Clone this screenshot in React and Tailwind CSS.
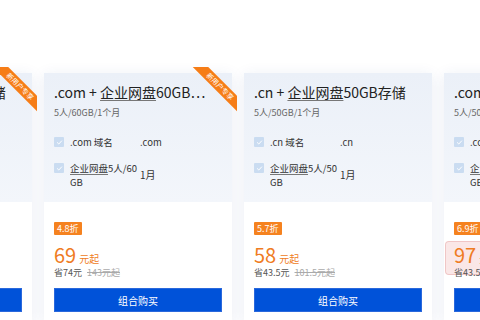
import React from "react";

const cards = [
  {
    pre: ".cn + ",
    post: "50GB存储",
    sub: "5人/50GB/1个月",
    domain: ".cn 域名",
    domainVal: ".cn",
    disk: "5人/50GB",
    discount: "5.7折",
    price: "58",
    save: "省43.5元",
    orig: "101.5元起",
    ribbon: true,
  },
  {
    pre: ".com + ",
    post: "60GB…",
    sub: "5人/60GB/1个月",
    domain: ".com 域名",
    domainVal: ".com",
    disk: "5人/60GB",
    discount: "4.8折",
    price: "69",
    save: "省74元",
    orig: "143元起",
    ribbon: true,
  },
  {
    pre: ".cn + ",
    post: "50GB存储",
    sub: "5人/50GB/1个月",
    domain: ".cn 域名",
    domainVal: ".cn",
    disk: "5人/50GB",
    discount: "5.7折",
    price: "58",
    save: "省43.5元",
    orig: "101.5元起",
  },
  {
    pre: ".com + ",
    post: "100GB存储",
    sub: "5人/50GB/1个月",
    domain: ".com 域名",
    domainVal: ".com",
    disk: "5人/50GB",
    discount: "6.9折",
    price: "97",
    save: "省43.5元",
    orig: "140.5元起",
    stamp: true,
  },
];

const Check = () => (
  <span className="mt-[2px] flex h-[10px] w-[10px] shrink-0 items-center justify-center rounded-[1px] bg-[#cadcf1]">
    <svg viewBox="0 0 10 10" className="h-[7px] w-[7px]" fill="none">
      <path d="M2 5.2l2 2 4-4.4" stroke="#fff" strokeWidth={1.4} strokeLinecap="round" strokeLinejoin="round" />
    </svg>
  </span>
);

const Ribbon = () => (
  <div className="pointer-events-none absolute -right-[5px] -top-[6px] z-10 h-[50px] w-[50px] overflow-hidden">
    <div className="absolute left-[-7px] top-[14px] flex h-[11px] w-[80px] rotate-45 items-center justify-center bg-[#f67d17] text-[7px] leading-none text-white">
      新用户专享
    </div>
  </div>
);

const Card = ({ c }) => (
  <div className="relative w-[188px] shrink-0 bg-white shadow-[0_2px_14px_rgba(30,70,140,0.09)]">
    {c.ribbon && <Ribbon />}

    {/* top: plan info */}
    <div className="bg-gradient-to-b from-[#ebf0f8] to-[#f3f6fb] px-[10px] pb-[13px] pt-2">
      <div className="whitespace-nowrap text-[14px] leading-[22px] text-[#222]">
        {c.pre}
        <span className="underline decoration-[#777] underline-offset-2">企业网盘</span>
        {c.post}
      </div>
      <div className="mt-[2px] text-[9px] leading-[16px] text-[#666]">{c.sub}</div>

      <div className="mt-[14px] flex flex-col gap-3 text-[9.5px] leading-[14px] text-[#333]">
        <div className="flex items-start">
          <Check />
          <span className="ml-[6px] w-[70px] shrink-0">{c.domain}</span>
          <span>{c.domainVal}</span>
        </div>
        <div className="flex items-start">
          <Check />
          <span className="ml-[6px] w-[70px] shrink-0 break-all">
            <span className="underline decoration-[#777] underline-offset-2">企业网盘</span>
            {c.disk}
          </span>
          <span className="self-center text-[10px]">1月</span>
        </div>
      </div>
    </div>

    {/* bottom: price */}
    <div className="relative px-[10px] pb-[10px] pt-[11px]">
      <span className="inline-block h-[13px] rounded-[1px] bg-[#f5821f] px-[3px] text-[9px] leading-[13px] text-white">
        {c.discount}
      </span>
      <div className="relative mt-[7px] flex items-baseline text-[#ef7c23]">
        {c.stamp && (
          <span className="absolute -left-[9px] -top-[3px] h-[34px] w-[46px] rounded-[4px] border border-[#eab0b0]/60 bg-[#f6cfcf]/50" />
        )}
        <span className="relative text-[20px] leading-[22px]">{c.price}</span>
        <span className="relative ml-[3px] text-[10px]">元起</span>
      </div>
      <div className="relative mt-[1px] whitespace-nowrap text-[9px] leading-[12px]">
        <span className="text-[#555]">{c.save}</span>
        <span className="ml-[5px] text-[#aaa] line-through">{c.orig}</span>
      </div>
      <button className="mt-[9px] flex h-[24px] w-full items-center justify-center border border-[#2a68dc] bg-[#0052d9] text-[10px] text-white">
        组合购买
      </button>
    </div>
  </div>
);

export default function App() {
  return (
    <div className="h-[320px] w-[480px] overflow-hidden bg-white font-['Noto_Sans_CJK_SC',sans-serif]">
      <div className="-ml-[156px] flex gap-3 pt-[73px]">
        {cards.map((c, i) => (
          <Card key={i} c={c} />
        ))}
      </div>
    </div>
  );
}
